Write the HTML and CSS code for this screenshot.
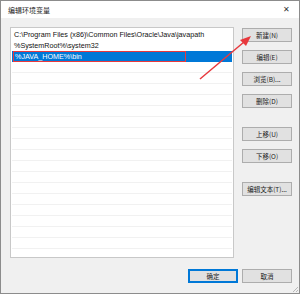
FILE: index.html
```html
<!DOCTYPE html>
<html>
<head>
    <title>编辑环境变量</title>
    <link rel="stylesheet" href="styles.css">
</head>
<body>
    <div class="window">
        <div class="titlebar">
            <span class="title">编辑环境变量</span>
            <span class="close">✕</span>
        </div>

        <div class="main">
            <div class="list">
                <div class="row">C:\Program Files (x86)\Common Files\Oracle\Java\javapath</div>
                <div class="row">%SystemRoot%\system32</div>
                <div class="row selected"><span class="mark">%JAVA_HOME%\bin</span></div>
                <div class="row empty"></div>
                <div class="row empty"></div>
                <div class="row empty"></div>
                <div class="row empty"></div>
                <div class="row empty"></div>
                <div class="row empty"></div>
                <div class="row empty"></div>
                <div class="row empty"></div>
                <div class="row empty"></div>
                <div class="row empty"></div>
                <div class="row empty"></div>
                <div class="row empty"></div>
                <div class="row empty"></div>
                <div class="row empty"></div>
                <div class="row empty"></div>
                <div class="row empty"></div>
                <div class="row empty"></div>
            </div>

            <div class="side">
                <button class="btn">新建(N)</button>
                <button class="btn">编辑(E)</button>
                <button class="btn">浏览(B)...</button>
                <button class="btn">删除(D)</button>
                <button class="btn gap">上移(U)</button>
                <button class="btn">下移(O)</button>
                <button class="btn gap">编辑文本(T)...</button>
            </div>
        </div>

        <div class="footer">
            <button class="btn default">确定</button>
            <button class="btn">取消</button>
        </div>

        <!-- annotation arrow -->
        <svg class="arrow" width="300" height="294" viewBox="0 0 300 294">
            <line x1="200" y1="79" x2="244" y2="42" stroke="#e8383d" stroke-width="1.5"/>
            <polygon points="251,36 240,40 246,46" fill="#e8383d"/>
        </svg>

        <div class="grip"></div>
    </div>
</body>
</html>
```

FILE: styles.css
```css
body {
    margin: 0;
    padding: 0;
    background-color: #fff;
    font-family: "Liberation Sans", "Noto Sans CJK SC", sans-serif;
}

.window {
    position: relative;
    width: 300px;
    height: 294px;
    box-sizing: border-box;
    border: 1px solid #8c8c8c;
    background-color: #f0f0f0;
    display: flex;
    flex-direction: column;
}

.titlebar {
    height: 17px;
    background-color: #fff;
    display: flex;
    align-items: center;
    justify-content: space-between;
    padding: 0 9px 0 7px;
    flex-shrink: 0;
}

.title {
    font-family: "Noto Sans CJK SC", sans-serif;
    font-size: 7px;
    color: #222;
}

.close {
    font-size: 8px;
    color: #333;
}

.main {
    display: flex;
    padding: 9px 0 0 9px;
    gap: 8px;
}

.list {
    width: 224px;
    height: 231px;
    box-sizing: border-box;
    background-color: #fff;
    border: 1px solid #c8c8c8;
    padding: 1px 1px 0 1px;
    overflow: hidden;
}

.row {
    height: 11px;
    box-sizing: border-box;
    padding-left: 2px;
    font-size: 7.2px;
    line-height: 11px;
    color: #111;
    white-space: nowrap;
}

.row.empty {
    border-bottom: 1px solid #f1f1f1;
}

.row.selected {
    background-color: #0078d7;
    color: #fff;
    padding-left: 1px;
}

.mark {
    display: inline-block;
    width: 173px;
    height: 11px;
    box-sizing: border-box;
    border: 1px solid #e8383d;
    padding-left: 1px;
    line-height: 9px;
}

.side {
    display: flex;
    flex-direction: column;
    gap: 8px;
    padding-top: 1px;
}

.btn {
    width: 50px;
    height: 14px;
    box-sizing: border-box;
    padding: 0;
    background-color: #e1e1e1;
    border: 1px solid #adadad;
    font-family: "Noto Sans CJK SC", sans-serif;
    font-size: 6.5px;
    color: #222;
}

.btn.gap {
    margin-top: 11px;
}

.footer {
    display: flex;
    justify-content: flex-end;
    gap: 4px;
    padding: 0 7px 0 0;
    margin-top: 11px;
}

.btn.default {
    border: 1px solid #0078d7;
    box-shadow: inset 0 0 0 1px #0078d7;
}

.arrow {
    position: absolute;
    left: -1px;
    top: -1px;
}

.grip {
    position: absolute;
    right: 1px;
    bottom: 1px;
    width: 5px;
    height: 5px;
    background: linear-gradient(135deg, transparent 50%, #b8b8b8 50%, #b8b8b8 60%, transparent 60%, transparent 75%, #b8b8b8 75%, #b8b8b8 85%, transparent 85%);
}
```
